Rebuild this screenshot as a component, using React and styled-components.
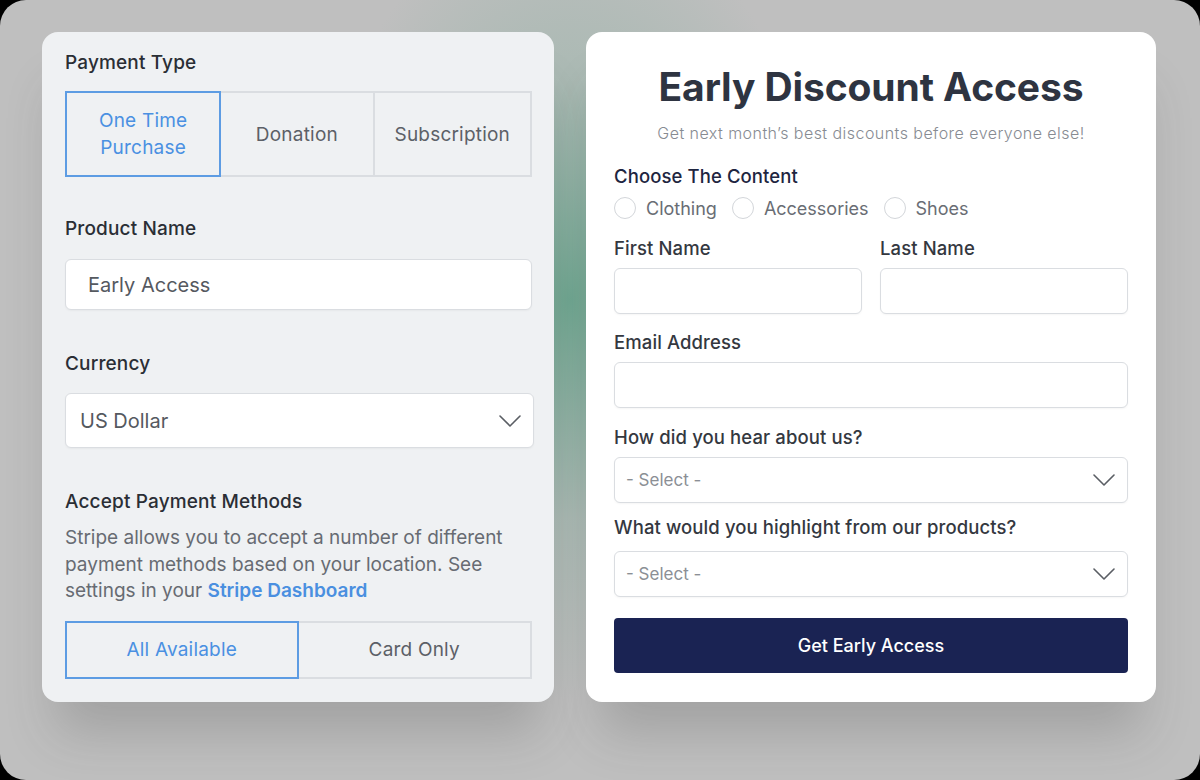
import React from "react";
import styled, { createGlobalStyle } from "styled-components";

const Global = createGlobalStyle`
  html, body { margin: 0; padding: 0; background: #000; }
  body { font-family: Inter, "Noto Sans", sans-serif; }
  * { box-sizing: border-box; }
`;

const Frame = styled.div`
  width: 1200px;
  height: 780px;
  border-radius: 26px;
  overflow: hidden;
  background:
    radial-gradient(ellipse 260px 400px at 570px 300px, rgba(108, 166, 143, 0.95), rgba(150, 180, 168, 0.5) 55%, rgba(191, 191, 191, 0) 100%),
    #bfbfbf;
  display: flex;
  align-items: flex-start;
  gap: 32px;
  padding: 32px 44px 0 42px;
`;

const Panel = styled.section`
  height: 670px;
  border-radius: 16px;
  background: ${(p) => (p.$white ? "#ffffff" : "#eff1f3")};
  box-shadow: 0 44px 50px -14px rgba(60, 60, 60, 0.22);
  display: flex;
  flex-direction: column;
`;

const LeftPanel = styled(Panel)`
  width: 512px;
  padding: 19px 22px 0 23px;
`;

const RightPanel = styled(Panel)`
  width: 570px;
  padding: 32px 28px 0 28px;
`;

const LeftLabel = styled.div`
  font-size: 19px;
  line-height: 24px;
  font-weight: 500;
  letter-spacing: 0.15px;
  color: #2a2e35;
  margin-top: ${(p) => p.$mt || 0}px;
`;

const Segments = styled.div`
  display: grid;
  grid-template-columns: ${(p) => p.$cols};
  height: ${(p) => p.$h}px;
  margin-top: ${(p) => p.$mt}px;
`;

const Segment = styled.div`
  display: flex;
  align-items: center;
  justify-content: center;
  text-align: center;
  font-size: 19px;
  line-height: 27px;
  letter-spacing: 0.2px;
  color: ${(p) => (p.$active ? "#4a90e2" : "#5c6067")};
  border: 2px solid ${(p) => (p.$active ? "#5d9ce3" : "#dadde1")};
  margin-left: ${(p) => (p.$first ? 0 : -2)}px;
  position: relative;
  z-index: ${(p) => (p.$active ? 1 : 0)};
  padding: 0 20px;
`;

const TextField = styled.div`
  height: ${(p) => p.$h}px;
  margin-top: ${(p) => p.$mt}px;
  margin-right: ${(p) => p.$mr || 0}px;
  background: #fff;
  border: 1px solid #dadde1;
  border-radius: 6px;
  box-shadow: 0 1px 2px rgba(0, 0, 0, 0.04);
  display: flex;
  align-items: center;
  justify-content: space-between;
  padding: 0 ${(p) => p.$pr || 20}px 0 ${(p) => p.$pl}px;
  font-size: ${(p) => p.$fs || 20}px;
  color: ${(p) => p.$color || "#55595f"};
`;

const Chevron = () => (
  <svg width="22" height="12" viewBox="0 0 22 12" fill="none">
    <polyline points="1,1 11,11 21,1" stroke="#5a5e64" strokeWidth="1.6" strokeLinejoin="round" strokeLinecap="round" />
  </svg>
);

const Para = styled.p`
  margin: 11px 0 0;
  font-size: 19px;
  line-height: 26.5px;
  color: #676b72;
`;

const Link = styled.a`
  color: #4a8fe0;
  font-weight: 600;
  text-decoration: none;
`;

const Title = styled.h1`
  margin: 0;
  text-align: center;
  font-size: 39px;
  line-height: 46px;
  font-weight: 700;
  letter-spacing: -0.1px;
  color: #2e3441;
`;

const Subtitle = styled.p`
  margin: 13px 0 0;
  text-align: center;
  font-size: 16px;
  line-height: 20px;
  font-weight: 300;
  letter-spacing: 0.45px;
  color: #878b92;
`;

const RLabel = styled.div`
  font-size: 18.5px;
  line-height: 22px;
  font-weight: 500;
  letter-spacing: 0.1px;
  color: ${(p) => (p.$navy ? "#1e2540" : "#34383f")};
  margin-top: ${(p) => p.$mt}px;
`;

const RadioRow = styled.div`
  display: flex;
  align-items: center;
  gap: 15px;
  height: 24px;
  margin-top: 9px;
`;

const RadioItem = styled.label`
  display: flex;
  align-items: center;
  gap: 10px;
  font-size: 18px;
  color: #696d74;
`;

const Circle = styled.span`
  width: 22px;
  height: 22px;
  border-radius: 50%;
  border: 1px solid #d3d6da;
  background: #fff;
`;

const TwoCols = styled.div`
  display: grid;
  grid-template-columns: 1fr 1fr;
  column-gap: 18px;
`;

const Col = styled.div`
  display: flex;
  flex-direction: column;
`;

const Submit = styled.button`
  margin-top: 21px;
  height: 55px;
  border: none;
  border-radius: 4px;
  background: #1a2353;
  color: #fff;
  font-family: inherit;
  font-size: 18px;
  font-weight: 500;
  cursor: pointer;
`;

export default function App() {
  return (
    <>
      <Global />
      <Frame>
        <LeftPanel>
          <LeftLabel>Payment Type</LeftLabel>
          <Segments $cols="157fr 154fr 157fr" $h={86} $mt={16}>
            <Segment $active $first>One Time Purchase</Segment>
            <Segment>Donation</Segment>
            <Segment>Subscription</Segment>
          </Segments>
          <LeftLabel $mt={40}>Product Name</LeftLabel>
          <TextField $h={51} $mt={18} $pl={22}>Early Access</TextField>
          <LeftLabel $mt={42}>Currency</LeftLabel>
          <TextField $h={55} $mt={17} $pl={14} $pr={12} $mr={-2}>
            US Dollar
            <Chevron />
          </TextField>
          <LeftLabel $mt={42}>Accept Payment Methods</LeftLabel>
          <Para>
            Stripe allows you to accept a number of different payment methods based on your location. See
            settings in your <Link>Stripe Dashboard</Link>
          </Para>
          <Segments $cols="1fr 1fr" $h={58} $mt={16}>
            <Segment $active $first>All Available</Segment>
            <Segment>Card Only</Segment>
          </Segments>
        </LeftPanel>
        <RightPanel $white>
          <Title>Early Discount Access</Title>
          <Subtitle>Get next month’s best discounts before everyone else!</Subtitle>
          <RLabel $navy $mt={22}>Choose The Content</RLabel>
          <RadioRow>
            <RadioItem><Circle />Clothing</RadioItem>
            <RadioItem><Circle />Accessories</RadioItem>
            <RadioItem><Circle />Shoes</RadioItem>
          </RadioRow>
          <TwoCols>
            <Col>
              <RLabel $mt={17}>First Name</RLabel>
              <TextField $h={46} $mt={9} $pl={12} />
            </Col>
            <Col>
              <RLabel $mt={17}>Last Name</RLabel>
              <TextField $h={46} $mt={9} $pl={12} />
            </Col>
          </TwoCols>
          <RLabel $mt={17}>Email Address</RLabel>
          <TextField $h={46} $mt={9} $pl={12} />
          <RLabel $mt={18}>How did you hear about us?</RLabel>
          <TextField $h={46} $mt={9} $pl={11} $pr={12} $fs={17} $color="#8b8f95">
            - Select -
            <Chevron />
          </TextField>
          <RLabel $mt={13}>What would you highlight from our products?</RLabel>
          <TextField $h={46} $mt={13} $pl={11} $pr={12} $fs={17} $color="#8b8f95">
            - Select -
            <Chevron />
          </TextField>
          <Submit>Get Early Access</Submit>
        </RightPanel>
      </Frame>
    </>
  );
}
